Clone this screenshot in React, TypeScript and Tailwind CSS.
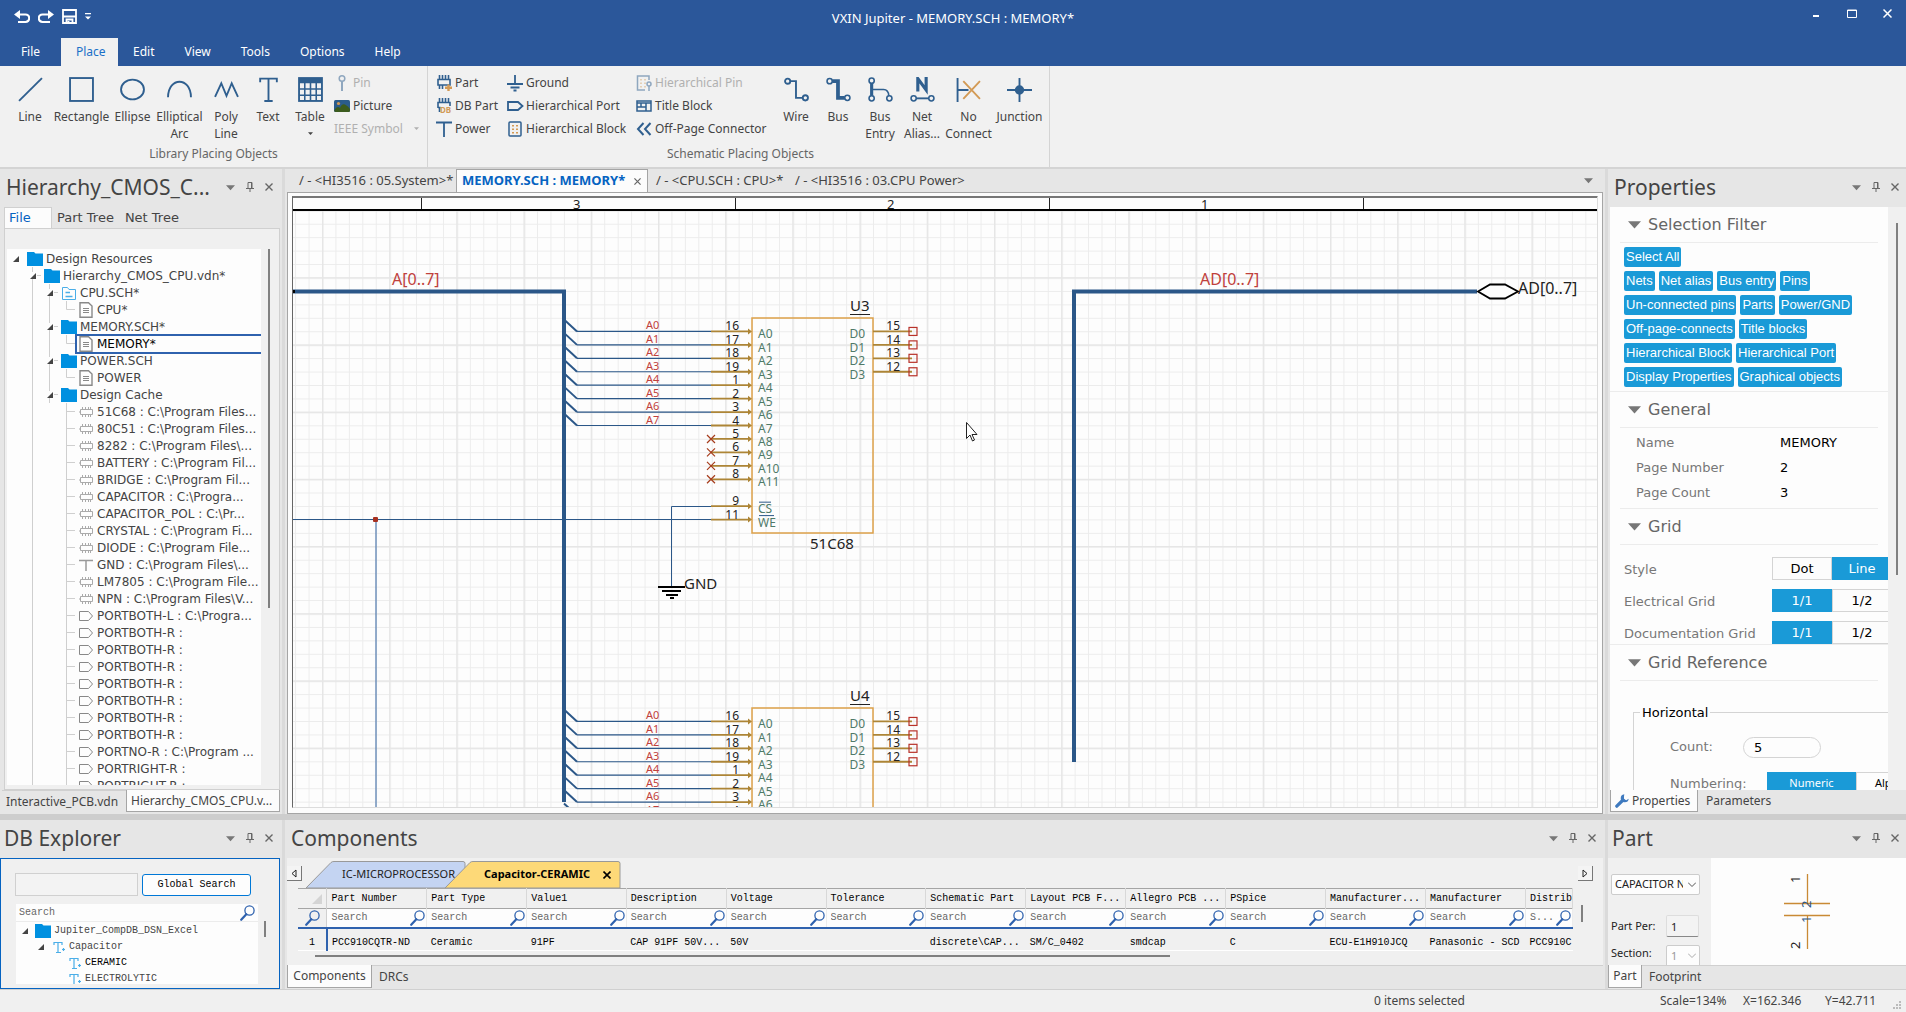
import React, { useState } from 'react';

const NAVY = '#2f5f8f';
const ORANGE = '#d39a55';

const menus = ['File', 'Place', 'Edit', 'View', 'Tools', 'Options', 'Help'];

/* ---------- small shared glyphs ---------- */

const Magnifier = () => (
  <svg width="15" height="16" viewBox="0 0 15 16" fill="none" className="shrink-0">
    <circle cx="9.5" cy="5.5" r="4.6" stroke="#2f62ae" strokeWidth="1.3" />
    <path d="M6.3 9.2 1.2 14.8" stroke="#2f62ae" strokeWidth="2.2" strokeLinecap="round" />
  </svg>
);

const Folder = () => (
  <svg width="16" height="14" viewBox="0 0 16 14" className="shrink-0">
    <path d="M0 0h7l1.500 1.500H16V14H0z" fill="#0090e0" />
  </svg>
);

const Triangle = ({ w = 9, color = '#777' }: { w?: number; color?: string }) => (
  <svg width={w} height={w} viewBox="0 0 10 10" className="shrink-0">
    <path d="M0 2.500h10L5 8z" fill={color} />
  </svg>
);

const Expander = () => (
  <svg width="6" height="6" viewBox="0 0 6 6" className="relative">
    <path d="M6 0v6H0z" fill="#444" />
  </svg>
);

function PanelHeader({ title }: { title: string }) {
  return (
    <div className="flex h-[38px] shrink-0 items-center justify-between pb-[2px] pl-1 pr-[7px]">
      <h2 className="whitespace-nowrap text-[21px] leading-7 text-[#444]">{title}</h2>
      <div className="flex items-center gap-[11px]">
        <button aria-label="Panel menu"><Triangle /></button>
        <button aria-label="Pin panel">
          <svg width="8" height="10" viewBox="0 0 8 10" fill="none" stroke="#666">
            <path d="M2 6V.500h4V6M0 6.500h8M4 6.500V10M5.500 1v5" />
          </svg>
        </button>
        <button aria-label="Close panel">
          <svg width="8" height="8" viewBox="0 0 8 8" stroke="#666" strokeWidth="1.400"><path d="m.5.500 7 7m0-7-7 7" /></svg>
        </button>
      </div>
    </div>
  );
}

/* ---------- ribbon ---------- */

const bigIcons: Record<string, React.ReactNode> = {
  Line: <path d="M1 23 23 1" />,
  Rectangle: <rect x="1" y="1" width="22" height="22" />,
  Ellipse: <ellipse cx="12" cy="12" rx="11" ry="9.500" />,
  Arc: <path d="M1 19.500C1 -.500 23 -.500 23 19.500" />,
  Poly: <path d="M1 19 7 6l5 12 5-12 6 13" />,
  Text: <path d="M4 5V1.500h16V5M12 1.500V23M8 23h8" />,
  Table: (
    <>
      <rect x="1" y="1" width="22" height="22" />
      <path d="M1 3.500h22" strokeWidth="5" />
      <path d="M1 11.500h22M1 17.500h22M6.500 5v18M12 5v18M17.500 5v18" strokeWidth="1.500" />
    </>
  ),
  Wire: (
    <>
      <circle cx="3.500" cy="4" r="2.500" /><circle cx="20.500" cy="20" r="2.500" />
      <path d="M6 4h5.500v16H18" />
    </>
  ),
  Bus: (
    <>
      <circle cx="3.500" cy="4" r="2.500" strokeWidth="1.500" /><circle cx="20.500" cy="20" r="2.500" strokeWidth="1.500" />
      <path d="M6 4h5.500v16H18" strokeWidth="3.600" />
    </>
  ),
  BusEntry: (
    <>
      <circle cx="3.500" cy="3.500" r="2.500" strokeWidth="1.500" /><circle cx="3.500" cy="20.500" r="2.500" strokeWidth="1.500" />
      <circle cx="20.500" cy="20.500" r="2.500" strokeWidth="1.500" />
      <path d="M3.500 6v12" strokeWidth="3" />
      <path d="M4 12h11q4.500 0 5 6" strokeWidth="1.500" />
    </>
  ),
  NetAlias: (
    <>
      <path d="M7.500 14V1.500l8 11V0" strokeWidth="3" />
      <circle cx="3.500" cy="20.500" r="2.500" strokeWidth="1.500" /><circle cx="20.500" cy="20.500" r="2.500" strokeWidth="1.500" />
      <path d="M6 20.500h12" />
    </>
  ),
  NoConnect: (
    <>
      <path d="M1.500 1v23M1.500 12.500H12" />
      <path d="m7 4 16 17M23 4 7 21" stroke={ORANGE} />
    </>
  ),
  Junction: (
    <>
      <path d="M12 1v23M0 12.500h24" />
      <circle cx="12" cy="12.500" r="4.500" fill={NAVY} stroke="none" />
    </>
  ),
};

function BigButton({ icon, label, width, menu }: { icon: string; label: string[]; width: string; menu?: boolean }) {
  return (
    <button className={`flex ${width} flex-col items-center pt-[11px] text-[12px] leading-[17px] text-[#444]`}>
      <svg width="25" height="25" viewBox="0 0 24 24" fill="none" stroke={NAVY} strokeWidth="1.800">
        {bigIcons[icon]}
      </svg>
      <span className="mt-1.5 whitespace-nowrap">{label[0]}</span>
      {label[1] && <span className="whitespace-nowrap">{label[1]}</span>}
      {menu && <span className="mt-1.5"><Triangle w={5} color="#444" /></span>}
    </button>
  );
}

const chipLegs = <path d="M3.500 0v4M6.500 0v4M9.500 0v4M12.500 0v4M2 4.500h12V10H2zM3.500 10v4M6.500 10v4" strokeWidth="1.600" />;

const smallIcons: Record<string, React.ReactNode> = {
  Pin: <><circle cx="8" cy="3.500" r="2.800" /><path d="M8 6v10" strokeWidth="2" /></>,
  Picture: (
    <g stroke="none">
      <rect y="2" width="16" height="12" rx="1.500" fill="#2b5c8c" />
      <path d="M0 13c2-4 4-5 6-3 2-5 5-5 10 1v1.500q0 1.500-1.500 1.500h-13z" fill="#3c5c1e" />
      <circle cx="4.500" cy="5.500" r="1.600" fill={ORANGE} />
    </g>
  ),
  Part: <>{chipLegs}<path d="M12.500 9.500v6.500M9 12.800h7" stroke={ORANGE} strokeWidth="2.400" /></>,
  DBPart: (
    <>
      <path d="M3.500 0v4M6.500 0v4M9.500 0v4M12.500 0v4M2 10V4.500h12V8M2 9.500h2.500M3.500 10v4" strokeWidth="1.600" />
      <text x="4" y="15" fontSize="8" fontWeight="700" fill={ORANGE} stroke="none">DB</text>
    </>
  ),
  Power: <path d="M0 1.500h16M8 1.500V16" strokeWidth="1.800" />,
  Ground: <path d="M8 0v9M0 9h16M3.500 12.500h9M6.500 15.500h3" strokeWidth="1.800" />,
  Port: <path d="M1 4h10l4.500 4L11 12H1z" strokeWidth="1.800" />,
  Block: (
    <>
      <rect x="2" y="1" width="12" height="14" rx="1" />
      <path d="M6 4v9M10 4v9" stroke={ORANGE} strokeWidth="2" strokeDasharray="1.500 2" />
    </>
  ),
  HPin: (
    <>
      <path d="M9 15H1.500V1H13v4" />
      <path d="M5 4v9M9 4v9" stroke={ORANGE} strokeDasharray="1.500 2" />
      <circle cx="13" cy="9" r="2" /><path d="M13 11v5" />
    </>
  ),
  Title: <><rect x="1" y="3" width="14" height="10" /><path d="M1 5h14M5 5v4M10 5v8M1 9h9" /></>,
  OffPage: <path d="M7.500 2 2 8l5.500 6M14.500 2 9 8l5.500 6" strokeWidth="2" />,
};

function SmallButton({ icon, label, disabled }: { icon: string; label: string; disabled?: boolean }) {
  return (
    <button disabled={disabled} className="flex h-[23px] items-center gap-[3px] whitespace-nowrap text-[12px] text-[#444] disabled:text-[#b0b0b0]">
      <svg width="16" height="16" viewBox="0 0 16 16" fill="none" stroke={NAVY} strokeWidth="1.500" className={`overflow-visible ${disabled ? 'opacity-50' : ''}`}>
        {smallIcons[icon]}
      </svg>
      {label}
    </button>
  );
}

function Ribbon() {
  return (
    <div className="flex h-[103px] shrink-0 border-b-2 border-[#d4d4d4] bg-[#f1f1f1]">
      <section className="flex flex-col border-r border-[#d4d4d4] pl-2 pr-2">
        <div className="flex h-[77px]">
          <BigButton icon="Line" label={['Line']} width="w-11" />
          <BigButton icon="Rectangle" label={['Rectangle']} width="w-[59px]" />
          <BigButton icon="Ellipse" label={['Ellipse']} width="w-[43px]" />
          <BigButton icon="Arc" label={['Elliptical', 'Arc']} width="w-[51px]" />
          <BigButton icon="Poly" label={['Poly', 'Line']} width="w-[42px]" />
          <BigButton icon="Text" label={['Text']} width="w-[42px]" />
          <BigButton icon="Table" label={['Table']} width="w-[42px]" menu />
          <div className="ml-[3px] flex w-[85px] flex-col pt-[5px]">
            <SmallButton icon="Pin" label="Pin" disabled />
            <SmallButton icon="Picture" label="Picture" />
            <button disabled className="flex h-[23px] items-center justify-between whitespace-nowrap text-[12px] text-[#b0b0b0]">
              IEEE Symbol
              <Triangle w={5} color="#b0b0b0" />
            </button>
          </div>
        </div>
        <p className="text-center text-[12px] leading-[22px] text-[#666]">Library Placing Objects</p>
      </section>
      <section className="flex flex-col border-r border-[#d4d4d4] pl-2 pr-1">
        <div className="flex h-[77px]">
          <div className="w-[71px] pt-[5px]">
            <SmallButton icon="Part" label="Part" />
            <SmallButton icon="DBPart" label="DB Part" />
            <SmallButton icon="Power" label="Power" />
          </div>
          <div className="w-[129px] pt-[5px]">
            <SmallButton icon="Ground" label="Ground" />
            <SmallButton icon="Port" label="Hierarchical Port" />
            <SmallButton icon="Block" label="Hierarchical Block" />
          </div>
          <div className="w-[139px] pt-[5px]">
            <SmallButton icon="HPin" label="Hierarchical Pin" disabled />
            <SmallButton icon="Title" label="Title Block" />
            <SmallButton icon="OffPage" label="Off-Page Connector" />
          </div>
          <BigButton icon="Wire" label={['Wire']} width="w-[42px]" />
          <BigButton icon="Bus" label={['Bus']} width="w-[42px]" />
          <BigButton icon="BusEntry" label={['Bus', 'Entry']} width="w-[42px]" />
          <BigButton icon="NetAlias" label={['Net', 'Alias...']} width="w-[42px]" />
          <BigButton icon="NoConnect" label={['No', 'Connect']} width="w-[51px]" />
          <BigButton icon="Junction" label={['Junction']} width="w-[51px]" />
        </div>
        <p className="text-center text-[12px] leading-[22px] text-[#666]">Schematic Placing Objects</p>
      </section>
    </div>
  );
}

/* ---------- hierarchy tree ---------- */

type Row = { text: string; icon: string; guides: string };

// guides: one letter per indent column, | through line, L elbow, T tee, + expander on a line, . blank
const treeRows: Row[] = [
  { text: 'Design Resources', icon: 'folder', guides: 'x' },
  { text: 'Hierarchy_CMOS_CPU.vdn*', icon: 'folder', guides: '.+' },
  { text: 'CPU.SCH*', icon: 'sch', guides: '.|+' },
  { text: 'CPU*', icon: 'page', guides: '.||L' },
  { text: 'MEMORY.SCH*', icon: 'folder', guides: '.|+' },
  { text: 'MEMORY*', icon: 'page', guides: '.||L' },
  { text: 'POWER.SCH', icon: 'folder', guides: '.|+' },
  { text: 'POWER', icon: 'page', guides: '.||L' },
  { text: 'Design Cache', icon: 'folder', guides: '.|+' },
  ...[
    ['51C68 : C:\\Program Files...', 'chip'],
    ['80C51 : C:\\Program Files...', 'chip'],
    ['8282 : C:\\Program Files\\...', 'chip'],
    ['BATTERY : C:\\Program Fil...', 'chip'],
    ['BRIDGE : C:\\Program Fil...', 'chip'],
    ['CAPACITOR : C:\\Progra...', 'chip'],
    ['CAPACITOR_POL : C:\\Pr...', 'chip'],
    ['CRYSTAL : C:\\Program Fi...', 'chip'],
    ['DIODE : C:\\Program File...', 'chip'],
    ['GND : C:\\Program Files\\...', 'power'],
    ['LM7805 : C:\\Program File...', 'chip'],
    ['NPN : C:\\Program Files\\V...', 'chip'],
    ['PORTBOTH-L : C:\\Progra...', 'port'],
    ['PORTBOTH-R :', 'port'],
    ['PORTBOTH-R :', 'port'],
    ['PORTBOTH-R :', 'port'],
    ['PORTBOTH-R :', 'port'],
    ['PORTBOTH-R :', 'port'],
    ['PORTBOTH-R :', 'port'],
    ['PORTBOTH-R :', 'port'],
    ['PORTNO-R : C:\\Program ...', 'port'],
    ['PORTRIGHT-R :', 'port'],
    ['PORTRIGHT-R :', 'port'],
  ].map(([text, icon]) => ({ text, icon, guides: '.|.T' })),
];

const Guide = ({ kind }: { kind: string }) => (
  <span className="relative flex h-[17px] w-[17px] shrink-0 items-center justify-center">
    <svg width="17" height="17" viewBox="0 0 17 17" className="absolute inset-0" stroke="#cfcfcf" fill="none">
      {kind === '|' && <path d="M8.500 0v17" />}
      {kind === 'T' && <path d="M8.500 0v17M8.500 8.500H17" />}
      {kind === 'L' && <path d="M8.500 0v8.500H17" />}
      {kind === '+' && <path d="M8.500 0v5M8.500 12v5M13 8.500h4" />}
    </svg>
    {(kind === '+' || kind === 'x') && <Expander />}
  </span>
);

function TreeIcon({ kind }: { kind: string }) {
  if (kind === 'folder') return <Folder />;
  return (
    <svg width="16" height="16" viewBox="0 0 16 16" fill="none" stroke="#888" className="shrink-0">
      {kind === 'sch' && (
        <>
          <path d="M1.500 14.500v-12h5l1.500 2h6.500v10z" stroke="#4aaee8" />
          <path d="M4.500 7.500H9M4.500 11.500h7" stroke="#4aaee8" strokeWidth="1.500" />
        </>
      )}
      {kind === 'page' && (
        <>
          <path d="M2 .750h8.500L14 4v11.250H2z" strokeWidth="1.400" />
          <path d="M5 6.500h6M5 8.500h6M5 10.500h6" />
        </>
      )}
      {kind === 'chip' && (
        <g stroke="#aaa">
          <path d="M2.500 5.500h12v5h-12z" />
          <path d="M4.500 3v2.500M7.500 3v2.500M10.500 3v2.500M12.500 3v2.500M4.500 10.500V13M7.500 10.500V13M10.500 10.500V13M12.500 10.500V13M1 8h1.500" />
        </g>
      )}
      {kind === 'power' && <path d="M1 3.500h14M8 3.500V14" stroke="#999" strokeWidth="1.500" />}
      {kind === 'port' && <path d="M1.500 3.500h9L14.500 8l-4 4.500h-9z" />}
    </svg>
  );
}

function HierarchyPanel() {
  const [selected, setSelected] = useState(5);
  return (
    <aside className="flex w-[280px] shrink-0 flex-col pl-[2px]">
      <PanelHeader title="Hierarchy_CMOS_C..." />
      <div className="flex h-[21px] shrink-0 pl-[2px] font-['DejaVu_Sans',sans-serif] text-[13px] text-[#444]">
        <button className="w-12 border border-b-0 border-[#d0d0d0] bg-[#fcfcfc] pl-1 text-left text-[#0563c1]">File</button>
        <button className="px-[5px]">Part Tree</button>
        <button className="px-[6px]">Net Tree</button>
      </div>
      <div className="ml-[2px] flex min-h-0 flex-1 border border-[#d0d0d0] bg-[#f0f0f0] pb-1 pl-[2px] pt-5">
        <ul className="min-w-0 flex-1 overflow-hidden bg-[#fdfdfd] pt-px font-['DejaVu_Sans',sans-serif] text-[12px] text-[#444]">
          {treeRows.map((row, i) => (
            <li key={i} className="flex h-[17px] items-center whitespace-nowrap" onClick={() => setSelected(i)}>
              {row.guides.split('').map((g, k) => <Guide key={k} kind={g} />)}
              <span
                className={`flex flex-1 items-center gap-[3px] ${
                  selected === i
                    ? 'h-5 border-2 border-r-0 border-[#2f62ae] pl-px text-black'
                    : 'h-[17px] pl-[3px]'
                }`}
              >
                <TreeIcon kind={row.icon} />
                {row.text}
              </span>
            </li>
          ))}
        </ul>
        <div className="w-[18px] pl-[7px]">
          <div className="h-[67%] w-[2px] bg-[#808080]" />
        </div>
      </div>
      <div className="flex h-6 shrink-0 items-start text-[12px] text-[#444]">
        <button className="h-[22px] flex-1 whitespace-nowrap border-t border-[#d0d0d0] pl-1 text-left">Interactive_PCB.vdn</button>
        <button className="h-[22px] w-[154px] whitespace-nowrap border border-t-0 border-[#a5a5a5] bg-[#fcfcfc] pl-1 text-left">Hierarchy_CMOS_CPU.v...</button>
      </div>
    </aside>
  );
}

/* ---------- schematic ---------- */

// everything below sits on the drawing's own grid: 13.44 units per cell
const PITCH = 13.44;
const leftPins = ['16', '17', '18', '19', '1', '2', '3', '4', '5', '6', '7', '8'];
const rightPins = ['15', '14', '13', '12'];

function LeftPin({ y, num, name }: { y: number; num: string; name: string }) {
  return (
    <g>
      <path d={`M418 ${y}h39`} stroke="#ad8536" strokeWidth="1.800" />
      <path d={`M455 ${y - 3}l4 3-4 3z`} fill="#ad8536" />
      <text x="446" y={y - 1} fontSize="12" textAnchor="end" fill="#222">{num}</text>
      <text x="465" y={y + 7} fontSize="12" fill="#4f7a68">{name}</text>
    </g>
  );
}

function Chip({ name, top }: { name: string; top: number }) {
  const first = top + PITCH;
  return (
    <g>
      <rect x="459" y={top} width="121" height="215" fill="none" stroke="#dda14a" strokeWidth="1.500" />
      <text x="557" y={top - 7} fontSize="15" fill="#222">{name}</text>
      <path d={`M557 ${top - 3.5}h20`} stroke="#222" />
      {leftPins.map((num, i) => {
        const y = first + i * PITCH;
        return (
          <g key={num}>
            <LeftPin y={y} num={num} name={`A${i}`} />
            {i < 8 ? (
              <>
                <path d={`M271 ${y - 12}l13 12`} stroke="#2b5788" strokeWidth="2" />
                <path d={`M284 ${y}h134`} stroke="#2b5788" strokeWidth="1.200" />
                <text x="353" y={y - 2} fontSize="11" fill="#c0413c">{`A${i}`}</text>
              </>
            ) : (
              <path d={`M414 ${y - 4}l8 8m0-8l-8 8`} stroke="#a63c1c" strokeWidth="1.200" />
            )}
          </g>
        );
      })}
      <LeftPin y={first + 13 * PITCH} num="9" name="CS" />
      <LeftPin y={first + 14 * PITCH} num="11" name="WE" />
      <path d={`M466 ${first + 13 * PITCH - 4}h12M466 ${first + 14 * PITCH - 4}h15`} stroke="#2b5788" />
      {rightPins.map((num, i) => {
        const y = first + i * PITCH;
        return (
          <g key={num}>
            <path d={`M580 ${y}h39`} stroke="#ad8536" strokeWidth="1.800" />
            <rect x="616" y={y - 4} width="8" height="8" fill="none" stroke="#b8322a" strokeWidth="1.200" />
            <text x="607" y={y - 1} fontSize="12" textAnchor="end" fill="#222">{num}</text>
            <text x="572" y={y + 7} fontSize="12" textAnchor="end" fill="#4f7a68">{`D${i}`}</text>
          </g>
        );
      })}
    </g>
  );
}

function Schematic() {
  return (
    <svg className="h-full w-full" fontFamily="'Noto Sans', sans-serif">
      <defs>
        <pattern id="minor" x="29" y="13.300" width={PITCH} height={PITCH} patternUnits="userSpaceOnUse">
          <path d="M0 .5H14M.5 0V14" stroke="#ececec" />
        </pattern>
        <pattern id="major" x="29" y="13" width={PITCH * 5} height={PITCH * 5} patternUnits="userSpaceOnUse">
          <path d="M0 .5H68M.5 0V68" stroke="#e6e6e6" strokeWidth="2" />
        </pattern>
      </defs>
      <rect width="100%" height="100%" fill="#fdfdfd" />
      <rect y="14" width="100%" height="100%" fill="url(#minor)" />
      <rect y="14" width="100%" height="100%" fill="url(#major)" />

      {/* sheet border with zone numbers */}
      <rect width="100%" height="14" fill="#fdfdfd" />
      <rect width="100%" height="1" fill="#777" />
      <rect y="12" width="100%" height="2" fill="#000" />
      <path d="M128.500 1v11M442.500 1v11M756.500 1v11M1070.500 1v11" stroke="#222" />
      <text x="280" y="12" fontSize="13" fill="#222">3</text>
      <text x="594" y="12" fontSize="13" fill="#222">2</text>
      <text x="908" y="12" fontSize="13" fill="#222">1</text>

      {/* control nets */}
      <path d="M0 322.500h418M378.500 389V309.500H418" fill="none" stroke="#2b5788" />
      <path d="M83 322V1000" stroke="#4f79ad" strokeWidth="1.200" />
      <rect x="80" y="320" width="5" height="5" rx="1" fill="#a63020" />
      <g stroke="#000" strokeWidth="2">
        <path d="M365 390h27M369 394h19M373 398h12M377 401h4" />
      </g>
      <text x="391" y="392" fontSize="15" fill="#222">GND</text>

      <Chip name="U3" top={121} />
      <Chip name="U4" top={511} />
      <text x="517" y="352" fontSize="15" fill="#222">51C68</text>

      {/* buses */}
      <path d="M0 94.500h271V605" fill="none" stroke="#2b5788" strokeWidth="4" />
      <path d="M1184 94.500H781V565" fill="none" stroke="#2b5788" strokeWidth="4" />
      <rect y="93" width="2" height="3" fill="#000" />
      <text x="99" y="88" fontSize="16" fill="#c0413c">A[0..7]</text>
      <text x="907" y="88" fontSize="16" fill="#c0413c">AD[0..7]</text>
      <path d="m1185 94.500 12-7h15l13 7-13 7h-15z" fill="#fdfdfd" stroke="#000" strokeWidth="1.800" />
      <text x="1225" y="97" fontSize="16" fill="#222">AD[0..7]</text>

      {/* pointer */}
      <path d="M673.500 225.500v16l3.500-3.500 2.500 6 2-1-2.500-5.500h5z" fill="#fff" stroke="#222" />
    </svg>
  );
}

function Workspace() {
  return (
    <main className="flex min-w-0 flex-1 flex-col">
      <div className="flex h-[23px] shrink-0 items-center whitespace-nowrap text-[13px] text-[#444]">
        <button className="w-[169px] pl-3 text-left">/ - &lt;HI3516 : 05.System&gt;*</button>
        <button className="flex h-[23px] w-[192px] items-center justify-between border border-b-0 border-[#a5a5a5] bg-[#fcfcfc] pl-[5px] pr-1.5 font-bold text-[#0563c1]">
          MEMORY.SCH : MEMORY*
          <svg width="7" height="7" viewBox="0 0 8 8" stroke="#666" strokeWidth="1.400"><path d="m.5.500 7 7m0-7-7 7" /></svg>
        </button>
        <button className="w-[141px] pl-2 text-left">/ - &lt;CPU.SCH : CPU&gt;*</button>
        <button className="pl-[6px]">/ - &lt;HI3516 : 03.CPU Power&gt;</button>
        <button aria-label="Open documents" className="ml-auto pr-2.5"><Triangle /></button>
      </div>
      <div className="min-h-0 flex-1 border border-[#a5a5a5] bg-[#fcfcfc] pb-[5px] pl-1 pr-1 pt-[3px]">
        <div className="h-full border border-[#dcdcdc] border-l-[#666] border-t-[#777]">
          <Schematic />
        </div>
      </div>
    </main>
  );
}

/* ---------- properties ---------- */

const filterRows = [
  ['Select All'],
  ['Nets', 'Net alias', 'Bus entry', 'Pins'],
  ['Un-connected pins', 'Parts', 'Power/GND'],
  ['Off-page-connects', 'Title blocks'],
  ['Hierarchical Block', 'Hierarchical Port'],
  ['Display Properties', 'Graphical objects'],
];

const SectionTitle = ({ children }: { children: React.ReactNode }) => (
  <h3 className="mx-[10px] flex h-9 shrink-0 items-center gap-[7px] border-b border-[#ececec] pl-2 text-[16px] text-[#666]">
    <Triangle w={13} />
    {children}
  </h3>
);

function Toggle({ label, options, active }: { label: string; options: string[]; active: number }) {
  const [on, setOn] = useState(active);
  return (
    <div className="flex items-center pl-[14px]">
      <span className="w-[148px] shrink-0 whitespace-nowrap pt-[2px] text-[#777]">{label}</span>
      <div className="flex shrink-0" role="group" aria-label={label}>
        {options.map((o, i) => (
          <button
            key={o}
            onClick={() => setOn(i)}
            className={`h-[23px] w-[60px] border ${on === i ? 'border-[#1a9ad7] bg-[#1a9ad7] text-white' : 'border-[#d4d4d4] bg-[#fcfcfc] text-black'}`}
          >
            {o}
          </button>
        ))}
      </div>
    </div>
  );
}

function PropertiesPanel() {
  return (
    <aside className="flex w-[298px] shrink-0 flex-col pl-[2px]">
      <PanelHeader title="Properties" />
      <div className="flex min-h-0 flex-1 bg-[#f0f0f0]">
        <div className="flex min-w-0 flex-1 flex-col overflow-hidden bg-[#fdfdfd] font-['DejaVu_Sans',sans-serif] text-[13px]">
          <SectionTitle>Selection Filter</SectionTitle>
          <div className="flex flex-col gap-1 border-b border-[#ececec] pb-1 pl-[14px] pt-1 font-['Liberation_Sans',sans-serif]">
            {filterRows.map((row, i) => (
              <div key={i} className="flex gap-1">
                {row.map(f => (
                  <button key={f} className="h-5 whitespace-nowrap rounded-[2px] bg-[#1a9ad7] px-[2px] text-white">{f}</button>
                ))}
              </div>
            ))}
          </div>
          <SectionTitle>General</SectionTitle>
          <dl className="mx-[10px] grid grid-cols-[144px_1fr] border-b border-[#ececec] pb-[3px] pl-4 pt-[2px] leading-[25px] text-[#777]">
            <dt>Name</dt>
            <dd className="text-black">MEMORY</dd>
            <dt>Page Number</dt>
            <dd className="text-black">2</dd>
            <dt>Page Count</dt>
            <dd className="text-black">3</dd>
          </dl>
          <SectionTitle>Grid</SectionTitle>
          <div className="flex flex-col gap-[9px] border-b border-[#ececec] pt-3">
            <Toggle label="Style" options={['Dot', 'Line']} active={1} />
            <Toggle label="Electrical Grid" options={['1/1', '1/2']} active={0} />
            <Toggle label="Documentation Grid" options={['1/1', '1/2']} active={0} />
          </div>
          <SectionTitle>Grid Reference</SectionTitle>
          <fieldset className="ml-[23px] mt-[22px] h-[120px] shrink-0 border border-r-0 border-[#d4d4d4] text-[#777]">
            <legend className="ml-1.5 px-[2px] text-black">Horizontal</legend>
            <div className="flex items-center pl-9 pt-[14px]">
              <label htmlFor="count" className="w-[73px]">Count:</label>
              <input id="count" defaultValue="5" className="h-[21px] w-[78px] rounded-full border border-[#d4d4d4] px-2.5 text-black" />
            </div>
            <div className="flex items-center whitespace-nowrap pl-9 pt-[14px]">
              <span className="w-[97px] shrink-0">Numbering:</span>
              <button className="h-6 w-[89px] shrink-0 bg-[#1a9ad7] font-['Noto_Sans',sans-serif] text-[11px] text-white">Numeric</button>
              <button className="h-6 w-[89px] shrink-0 border border-[#d4d4d4] pl-[18px] text-left font-['Noto_Sans',sans-serif] text-[11px] text-black">Alphabetic</button>
            </div>
          </fieldset>
        </div>
        <div className="w-[18px] pl-2 pt-4">
          <div className="h-[62%] w-[2px] bg-[#808080]" />
        </div>
      </div>
      <div className="flex h-6 shrink-0 items-start text-[12px] text-[#444]">
        <button className="flex h-[22px] w-[88px] items-center gap-[3px] border border-t-0 border-[#a5a5a5] bg-[#fcfcfc] pl-1">
          <svg width="14" height="14" viewBox="0 0 14 14" className="shrink-0">
            <path d="M1.800 12.200 8 6" stroke="#3f7abf" strokeWidth="3.200" strokeLinecap="round" />
            <path d="M9.300.300a4 4 0 1 0 4.400 4.400l-2.500 1.500-2.200-1.200V2.500z" fill="#3f7abf" />
          </svg>
          Properties
        </button>
        <button className="h-[22px] pl-2">Parameters</button>
      </div>
    </aside>
  );
}

/* ---------- bottom dock ---------- */

const PartIcon = () => (
  <svg width="13" height="13" viewBox="0 0 13 13" fill="none" stroke="#4aaee8" className="shrink-0">
    <path d="M1 4V1.500h8V4M5 1.500v10M3 11.500h5M9 8.500h3M10.500 7v3" strokeWidth="1.200" />
  </svg>
);

function DbExplorer() {
  return (
    <aside className="flex w-[280px] shrink-0 flex-col">
      <PanelHeader title="DB Explorer" />
      <div className="flex min-h-0 flex-1 flex-col overflow-hidden border border-[#0563c1] bg-[#f0f0f0] pb-1 pl-[14px] font-['Liberation_Mono',monospace] text-[10px] text-[#444]">
        <div className="flex items-center gap-1 pt-[14px]">
          <input aria-label="Part keyword" className="h-[23px] w-[123px] border border-[#d0d0d0] bg-[#f3f3f3]" />
          <button className="h-[22px] w-[109px] rounded-[3px] border border-[#0078d7] bg-[#fdfdfd] text-black">Global Search</button>
        </div>
        <div className="flex min-h-0 flex-1 pt-2">
          <div className="ml-px flex w-[242px] flex-col overflow-hidden bg-[#fdfdfd]">
            <label className="flex h-[18px] shrink-0 items-center border-b border-[#ececec] pl-[3px] pr-[3px]">
              <input aria-label="Search libraries" placeholder="Search" className="min-w-0 flex-1 placeholder:text-[#666]" />
              <Magnifier />
            </label>
            <ul className="whitespace-nowrap pt-px leading-4">
              <li className="flex h-4 items-center gap-[3px] pl-1.5"><Expander /><span className="ml-1"><Folder /></span>Jupiter_CompDB_DSN_Excel</li>
              <li className="flex h-4 items-center gap-[3px] pl-[22px]"><Expander /><span className="ml-[6px]"><PartIcon /></span>Capacitor</li>
              <li className="flex h-4 items-center gap-[3px] pl-[53px] text-black"><PartIcon />CERAMIC</li>
              <li className="flex h-4 items-center gap-[3px] pl-[53px]"><PartIcon />ELECTROLYTIC</li>
            </ul>
          </div>
          <div className="pl-1.5 pt-[17px]">
            <div className="h-4 w-[2px] bg-[#808080]" />
          </div>
        </div>
      </div>
    </aside>
  );
}

const columns: [string, string][] = [
  ['Part Number', 'PCC910CQTR-ND'],
  ['Part Type', 'Ceramic'],
  ['Value1', '91PF'],
  ['Description', 'CAP 91PF 50V...'],
  ['Voltage', '50V'],
  ['Tolerance', ''],
  ['Schematic Part', 'discrete\\CAP...'],
  ['Layout PCB F...', 'SM/C_0402'],
  ['Allegro PCB ...', 'smdcap'],
  ['PSpice', 'C'],
  ['Manufacturer...', 'ECU-E1H910JCQ'],
  ['Manufacturer', 'Panasonic - SCD'],
  ['Distrib', 'PCC910C'],
];

function Components() {
  return (
    <section className="flex min-w-0 flex-1 flex-col">
      <PanelHeader title="Components" />
      <div className="flex min-h-0 flex-1 flex-col bg-[#f0f0f0]">
        <div className="flex h-[30px] shrink-0 items-end pr-[10px]">
          <button aria-label="Scroll tabs left" className="mb-[7px] flex h-[15px] w-[15px] items-center justify-center border-b border-r border-[#777] bg-[#f4f4f4]">
            <svg width="6" height="9" viewBox="0 0 6 9" fill="none" stroke="#222"><path d="M5 1v7L1 4.500z" /></svg>
          </button>
          <button className="relative ml-1 h-[27px] w-[161px] text-[11px] text-[#222]">
            <svg viewBox="0 0 161 27" className="absolute inset-0 h-full w-full" preserveAspectRatio="none">
              <path d="M0 27 25 1.500Q26 .500 28 .500H157q2 0 2 2V27z" fill="#c4d4f2" stroke="#999" />
            </svg>
            <span className="relative flex h-full items-center pl-9">IC-MICROPROCESSOR</span>
          </button>
          <button className="relative -ml-[22px] h-[27px] w-[176px] text-[11px] font-bold text-black">
            <svg viewBox="0 0 176 27" className="absolute inset-0 h-full w-full" preserveAspectRatio="none">
              <path d="M0 27 25 1.500Q26 .500 28 .500H173q2 0 2 2V27z" fill="#fdd978" stroke="#999" />
            </svg>
            <span className="relative flex h-full items-center justify-between pl-[39px] pr-2.5">
              Capacitor-CERAMIC
              <svg width="8" height="8" viewBox="0 0 8 8" stroke="#000" strokeWidth="1.600"><path d="m.5.500 7 7m0-7-7 7" /></svg>
            </span>
          </button>
          <button aria-label="Scroll tabs right" className="mb-[7px] ml-auto flex h-[15px] w-[15px] items-center justify-center border-b border-r border-[#777] bg-[#f4f4f4]">
            <svg width="6" height="9" viewBox="0 0 6 9" fill="none" stroke="#222"><path d="M1 1v7l4-3.500z" /></svg>
          </button>
        </div>
        <div className="flex pl-[11px] pr-5">
          <table className="min-w-0 flex-1 table-fixed border-collapse border-b border-white font-['Liberation_Mono',monospace] text-[10px] text-black">
            <colgroup>
              <col className="w-[29px]" />
              {columns.slice(0, -1).map(([name]) => <col key={name} className="w-[100px]" />)}
              <col />
            </colgroup>
            <thead>
              <tr className="h-5 border-y border-[#a5a5a5]">
                <th className="border-r border-[#d0d0d0]">
                  <svg width="10" height="10" viewBox="0 0 10 10" className="ml-auto mr-1"><path d="M10 0v10H0z" fill="#d4d4d4" /></svg>
                </th>
                {columns.map(([name]) => (
                  <th key={name} className="overflow-hidden whitespace-nowrap border-r border-[#d8d8d8] pl-1 text-left font-normal">{name}</th>
                ))}
              </tr>
              <tr className="h-[19px] border-b-2 border-[#2f62ae] bg-[#fdfdfd]">
                <td className="border-r border-[#d0d0d0] bg-[#f0f0f0] pl-[7px]"><Magnifier /></td>
                {columns.map(([name], i) => (
                  <td key={name} className="border-r border-[#ececec] pl-1 pr-px">
                    <div className="flex items-center">
                      <input
                        aria-label={`Search ${name}`}
                        placeholder={i === columns.length - 1 ? 'S...' : 'Search'}
                        className="w-0 min-w-0 flex-1 placeholder:text-[#666]"
                      />
                      <Magnifier />
                    </div>
                  </td>
                ))}
              </tr>
            </thead>
            <tbody>
              <tr className="h-[21px]">
                <td className="border-r-2 border-r-[#2f62ae] pt-1.5 text-center">1</td>
                {columns.map(([name, value]) => (
                  <td key={name} className="overflow-hidden whitespace-nowrap pl-1 pt-1.5">{value}</td>
                ))}
              </tr>
            </tbody>
          </table>
          <div className="ml-2 mt-[17px] h-[17px] w-[2px] bg-[#808080]" />
        </div>
        <div className="ml-7 mt-1 h-[2px] w-[65%] bg-[#808080]" />
      </div>
      <div className="flex h-6 shrink-0 items-start border-t border-[#d0d0d0] bg-[#e6e6e6] text-[12px] text-[#444]">
        <button className="-mt-px h-[23px] w-[85px] border border-t-0 border-[#a5a5a5] bg-[#fcfcfc]">Components</button>
        <button className="h-[22px] pl-[7px]">DRCs</button>
      </div>
    </section>
  );
}

function PartPanel() {
  return (
    <aside className="flex w-[298px] shrink-0 flex-col">
      <PanelHeader title="Part" />
      <div className="flex min-h-0 flex-1 overflow-hidden">
        <div className="w-[103px] shrink-0 overflow-hidden bg-[#f0f0f0] pl-[3px] text-[11px] text-[#222]">
          <div className="relative mt-4 w-[89px]">
            <select aria-label="Part name" className="h-[21px] w-full appearance-none overflow-hidden rounded-[2px] border border-[#ccc] bg-[#fdfdfd] pl-[3px] pr-4 text-[11px]">
              <option>CAPACITOR NP</option>
            </select>
            <svg width="8" height="5" viewBox="0 0 8 5" fill="none" stroke="#555" className="pointer-events-none absolute right-1 top-2"><path d="m0 .5 4 4 4-4" /></svg>
          </div>
          <div className="mt-5 flex items-center">
            <label htmlFor="partper" className="w-[55px]">Part Per:</label>
            <input id="partper" defaultValue="1" className="h-[22px] w-[33px] rounded-[2px] border border-[#ddd] border-b-[#888] bg-[#f3f3f3] pl-1" />
          </div>
          <div className="mt-2 flex items-start">
            <label htmlFor="section" className="w-[55px]">Section:</label>
            <div className="relative">
              <select id="section" disabled className="h-[22px] w-[34px] appearance-none rounded-[2px] border border-[#ccc] bg-[#fdfdfd] pl-1 text-[11px] text-[#999]">
                <option>1</option>
              </select>
              <svg width="8" height="5" viewBox="0 0 8 5" fill="none" stroke="#aaa" className="pointer-events-none absolute right-1 top-2"><path d="m0 .5 4 4 4-4" /></svg>
            </div>
          </div>
        </div>
        <div className="flex-1 bg-[#fdfdfd]">
          <svg width="195" height="107" viewBox="0 0 195 107" fontFamily="'Noto Sans', sans-serif" fontSize="13">
            <path d="M96.500 16v29.500M73 45.500h46M73 57.500h46M96.500 57.500V91" stroke="#c98a35" strokeWidth="1.300" />
            <text transform="translate(89 25) rotate(-90)" fill="#222">1</text>
            <text transform="translate(100 50) rotate(-90)" fill="#2b5788">2</text>
            <text transform="translate(100 65) rotate(-90)" fill="#2b5788">1</text>
            <text transform="translate(89 91) rotate(-90)" fill="#222">2</text>
          </svg>
        </div>
      </div>
      <div className="flex h-6 shrink-0 items-start border-t border-[#d0d0d0] text-[12px] text-[#444]">
        <button className="-mt-px h-[23px] w-[34px] border border-t-0 border-[#a5a5a5] bg-[#fcfcfc]">Part</button>
        <button className="h-[22px] pl-[7px]">Footprint</button>
      </div>
    </aside>
  );
}

/* ---------- shell ---------- */

export default function App() {
  const [menu, setMenu] = useState('Place');

  return (
    <div className="flex h-screen flex-col overflow-hidden bg-[#e6e6e6] font-['Noto_Sans',sans-serif]">
      <header className="flex h-[66px] shrink-0 flex-col bg-[#2b579a] text-[12px] text-white">
        <div className="grid h-[38px] grid-cols-3 items-start">
          <div className="flex items-center gap-2 pl-[14px] pt-[9px]">
            <button aria-label="Undo">
              <svg width="16" height="14" viewBox="0 0 16 14" fill="none" stroke="#fff" strokeWidth="2.200"><path d="M3 4.500h8.500a3.500 3.500 0 0 1 0 7.500H4" /><path d="M6 0v9L0 4.500z" fill="#fff" stroke="none" /></svg>
            </button>
            <button aria-label="Redo">
              <svg width="16" height="14" viewBox="0 0 16 14" fill="none" stroke="#fff" strokeWidth="2.200"><path d="M13 4.500H4.500a3.500 3.500 0 0 0 0 7.500H12" /><path d="M10 0v9l6-4.500z" fill="#fff" stroke="none" /></svg>
            </button>
            <button aria-label="Save">
              <svg width="15" height="15" viewBox="0 0 15 15" fill="none" stroke="#fff" strokeWidth="1.800"><path d="M1 1h13v13H1zM1.500 7.500h12M4.500 14v-3.500h6V14M6.500 14v-2" /></svg>
            </button>
            <button aria-label="Customize toolbar">
              <svg width="6" height="7" viewBox="0 0 6 7" fill="#fff"><path d="M0 0h6v1.300H0zM0 3.500h6L3 6.500z" /></svg>
            </button>
          </div>
          <h1 className="whitespace-nowrap pt-[9px] text-center text-[13px] leading-[18px]">VXIN Jupiter - MEMORY.SCH : MEMORY*</h1>
          <div className="flex items-center justify-end gap-[26px] pr-[14px] pt-2">
            <button aria-label="Minimize"><svg width="9" height="10" viewBox="0 0 9 10" fill="#fff"><path d="M1 7h6v2H1z" /></svg></button>
            <button aria-label="Maximize"><svg width="10" height="9" viewBox="0 0 10 9" fill="none" stroke="#fff"><path d="M.5 1h9v7.500h-9zM.5 1.500h9" /></svg></button>
            <button aria-label="Close"><svg width="9" height="9" viewBox="0 0 9 9" stroke="#fff" strokeWidth="1.500"><path d="m.5.500 8 8m0-8-8 8" /></svg></button>
          </div>
        </div>
        <nav className="flex h-7">
          {menus.map(m => (
            <button
              key={m}
              onClick={() => setMenu(m)}
              className={`px-[15px] first:w-[61px] ${menu === m ? 'w-[57px] bg-[#f1f1f1] px-[13px] text-[#1a70c8]' : ''}`}
            >
              {m}
            </button>
          ))}
        </nav>
      </header>

      <Ribbon />

      <div className="flex min-h-0 flex-1">
        <HierarchyPanel />
        <div className="mx-[2px] w-[3px] shrink-0 bg-[#dadada]" />
        <Workspace />
        <div className="ml-[2px] w-[3px] shrink-0 bg-[#dadada]" />
        <PropertiesPanel />
      </div>

      <div className="h-[6px] shrink-0 bg-[#cdcdcd]" />

      <div className="flex h-[169px] shrink-0">
        <DbExplorer />
        <div className="mx-[2px] w-[3px] shrink-0 bg-[#dadada]" />
        <Components />
        <div className="ml-[2px] w-[3px] shrink-0 bg-[#dadada]" />
        <PartPanel />
      </div>

      <footer className="flex h-[23px] shrink-0 items-center border-t border-[#d0d0d0] bg-[#f0f0f0] pr-1 text-[12px] text-[#444]">
        <span className="ml-auto w-[286px]">0 items selected</span>
        <span className="w-[83px]">Scale=134%</span>
        <span className="w-[82px]">X=162.346</span>
        <span className="w-[68px]">Y=42.711</span>
        <svg width="9" height="9" viewBox="0 0 9 9" fill="#bbb" className="mt-2">
          <path d="M6 0h2v2H6zM3 3h2v2H3zM6 3h2v2H6zM0 6h2v2H0zM3 6h2v2H3zM6 6h2v2H6z" />
        </svg>
      </footer>
    </div>
  );
}
